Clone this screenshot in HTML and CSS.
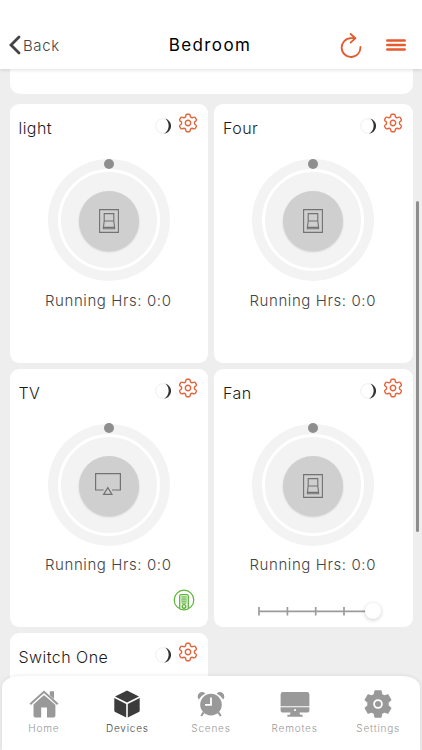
FILE: index.html
```html
<!DOCTYPE html>
<html lang="en">
<head>
<meta charset="utf-8">
<title>Bedroom</title>
<link rel="stylesheet" href="styles.css">
</head>
<body>
<svg class="defs" aria-hidden="true">
  <symbol id="gear" viewBox="-10 -10 20 20">
    <path d="M-2.4-6.2Q-2.1-8.8-1.2-8.8H1.2Q2.1-8.8 2.4-6.2Q3.2-5.2 4.4-5.3Q6.8-6.3 7.3-5.3L8.4-3.3Q8.8-2.5 6.7-1.1Q6 0 6.7 1.1Q8.8 2.5 8.4 3.3L7.3 5.3Q6.8 6.3 4.4 5.3Q3.2 5.2 2.4 6.2Q2.1 8.8 1.2 8.8H-1.2Q-2.1 8.8-2.4 6.2Q-3.2 5.2-4.4 5.3Q-6.8 6.3-7.3 5.3L-8.4 3.3Q-8.8 2.5-6.7 1.1Q-6 0-6.7-1.1Q-8.8-2.5-8.4-3.3L-7.3-5.3Q-6.8-6.3-4.4-5.3Q-3.2-5.2-2.4-6.2Z" fill="none" stroke="#e4643c" stroke-width="1.4" stroke-linejoin="round"/>
    <circle r="2.7" fill="none" stroke="#e4643c" stroke-width="1.4"/>
  </symbol>
  <symbol id="moon" viewBox="0 0 16 16">
    <circle cx="8" cy="8" r="7.3" fill="none" stroke="#e6e6e6" stroke-width=".7"/>
    <path d="M10.4.6A7.7 7.7 0 0 1 9 15.7A9.3 9.3 0 0 0 10.4.6Z" fill="#333"/>
  </symbol>
  <symbol id="switch" viewBox="0 0 20 24">
    <g fill="none" stroke="#727272" stroke-width="1.1">
      <path d="M.6.6H19.4V23.4H.6Z"/>
      <path d="M5.2 4.6H14.8V12L15.6 18.6V19.8H4.4V18.6L5.2 12ZM5.2 12H14.8M4.4 18.4H15.6"/>
    </g>
  </symbol>
  <symbol id="tv" viewBox="0 0 26 22">
    <path d="M8.6 17H.6V.6H25.4V17H17M12.8 14.6L17 21.4H8.6Z" fill="none" stroke="#727272" stroke-width="1.2"/>
  </symbol>
</svg>
<header class="topbar">
  <div class="back">
    <svg width="12" height="20" viewBox="0 0 12 20"><path d="M10 2L2 10L10 18" fill="none" stroke="#444" stroke-width="2.8" stroke-linecap="round"/></svg>
    <span>Back</span>
  </div>
  <h1>Bedroom</h1>
  <div class="actions">
    <svg width="22" height="25" viewBox="0 0 22 25"><path d="M20.4 13.8A9.4 9.4 0 1 1 11 5.2H15.4M10.6 1L15.4 5.2L10.6 9.6" fill="none" stroke="#e55a2e" stroke-width="1.8" stroke-linecap="round" stroke-linejoin="round"/></svg>
    <svg width="20" height="12" viewBox="0 0 20 12"><path d="M1.3 1.4H18.7M1.3 6H18.7M1.3 10.6H18.7" stroke="#e55a2e" stroke-width="2.5" stroke-linecap="round"/></svg>
  </div>
</header>
<main>
  <section class="summary"></section>
  <section class="grid">
    <article class="card">
      <div class="head"><h2>light</h2><svg class="moon"><use href="#moon"/></svg><svg class="gear"><use href="#gear"/></svg></div>
      <div class="dial"><i class="knob"></i><div class="ring"><div class="core"><svg width="20" height="24"><use href="#switch"/></svg></div></div></div>
      <p>Running Hrs: <b>0:0</b></p>
    </article>
    <article class="card">
      <div class="head"><h2>Four</h2><svg class="moon"><use href="#moon"/></svg><svg class="gear"><use href="#gear"/></svg></div>
      <div class="dial"><i class="knob"></i><div class="ring"><div class="core"><svg width="20" height="24"><use href="#switch"/></svg></div></div></div>
      <p>Running Hrs: <b>0:0</b></p>
    </article>
    <article class="card">
      <div class="head"><h2>TV</h2><svg class="moon"><use href="#moon"/></svg><svg class="gear"><use href="#gear"/></svg></div>
      <div class="dial"><i class="knob"></i><div class="ring"><div class="core"><svg class="tv" width="26" height="22"><use href="#tv"/></svg></div></div></div>
      <p>Running Hrs: <b>0:0</b></p>
      <svg class="remote" width="22" height="22" viewBox="0 0 22 22">
        <g fill="none" stroke="#5cb338">
          <circle cx="11" cy="11" r="9.8" stroke-width="1.2"/>
          <path d="M6.7 19.8V7.3Q6.7 5.6 8.4 5.6H13.6Q15.3 5.6 15.3 7.3V19.8" stroke-width="1.3"/>
          <path d="M8.6 7.8H13.4M8.6 10.1H13.4M8.6 12.3H13.4M8.6 14.4H13.4M9 7.4V14M11 7.4V14M13 7.4V14" stroke-width=".8"/>
          <circle cx="11" cy="17.4" r="1.8" stroke-width="1.4"/>
        </g>
      </svg>
    </article>
    <article class="card">
      <div class="head"><h2>Fan</h2><svg class="moon"><use href="#moon"/></svg><svg class="gear"><use href="#gear"/></svg></div>
      <div class="dial"><i class="knob"></i><div class="ring"><div class="core"><svg width="20" height="24"><use href="#switch"/></svg></div></div></div>
      <p>Running Hrs: <b>0:0</b></p>
      <div class="slider"><svg width="115" height="9" viewBox="0 0 115 9"><path d="M1 4.3H114M1 0V8.6M29.4 0V8.6M57.7 0V8.6M86 0V8.6" stroke="#9c9c9c" stroke-width="1.7"/></svg><i class="thumb"></i></div>
    </article>
    <article class="card">
      <div class="head"><h2>Switch One</h2><svg class="moon"><use href="#moon"/></svg><svg class="gear"><use href="#gear"/></svg></div>
    </article>
  </section>
</main>
<i class="scrollbar"></i>
<nav>
  <a><svg width="30" height="28" viewBox="0 0 30 28" fill="#999"><path d="M15 4.9L4.5 14.2V25.5Q4.5 27.4 6.4 27.4H12.2V17.5H18V27.4H24.6Q26.4 27.4 26.4 25.5V14.2Z"/><path d="M1.2 14.3L15 1.8L28.8 14.3" fill="none" stroke="#999" stroke-width="2"/><path d="M3.2 15L15 4.4L26.8 15" fill="none" stroke="#fff" stroke-width=".7"/><path d="M20.8 1.2H25V9L20.8 5.3Z"/></svg><span>Home</span></a>
  <a class="on"><svg width="28" height="28" viewBox="0 0 28 28" fill="#3c3c3c"><path d="M14 .4L26 6.4L14 12.5L2 6.4ZM1.3 8L13.2 14V27.5L2.2 22Q1.3 21.5 1.3 20.5ZM26.7 8L14.8 14V27.5L25.8 22Q26.7 21.5 26.7 20.5Z"/></svg><span>Devices</span></a>
  <a><svg width="28" height="28" viewBox="0 0 28 28" fill="#999"><circle cx="14" cy="14.6" r="10.8"/><path d="M1.8 9.4A4.1 4.1 0 1 1 8.4 3.6Q4.4 5.6 1.8 9.4ZM26.2 9.4A4.1 4.1 0 1 0 19.6 3.6Q23.6 5.6 26.2 9.4Z"/><path d="M6.6 22.4L4.2 26M21.4 22.4L23.8 26" stroke="#999" stroke-width="2"/><path d="M14 7.6V14.8H8" fill="none" stroke="#fff" stroke-width="1.8"/></svg><span>Scenes</span></a>
  <a><svg width="30" height="28" viewBox="0 0 30 28" fill="#999"><path d="M3 2H27Q29.4 2 29.4 4.4V16.2H.6V4.4Q.6 2 3 2ZM.6 17.3H29.4V20Q29.4 22.6 27 22.6H19.5L20 24.8H22.6V26.7H7.4V24.8H10L10.5 22.6H3Q.6 22.6.6 20Z"/><circle cx="15" cy="20" r="1.1" fill="#fff"/></svg><span>Remotes</span></a>
  <a><svg width="28" height="28" viewBox="-14 -14 28 28"><path d="M-3.5-9.4L-2.9-12.9H2.9L3.5-9.4L6.4-7.7L9.7-9L12.6-4L9.9-1.8V1.8L12.6 4L9.7 9L6.4 7.7L3.5 9.4L2.9 12.9H-2.9L-3.5 9.4L-6.4 7.7L-9.7 9L-12.6 4L-9.9 1.8V-1.8L-12.6-4L-9.7-9L-6.4-7.7Z" fill="#999" stroke="#999" stroke-width="1.6" stroke-linejoin="round"/><circle r="3.9" fill="#999" stroke="#fff" stroke-width="1.8"/></svg><span>Settings</span></a>
</nav>
</body>
</html>
```
FILE: styles.css
```css
* { box-sizing: border-box; }
body {
  margin: 0;
  height: 750px;
  overflow: hidden;
  position: relative;
  background: #eee;
  font-family: Inter, "Liberation Sans", sans-serif;
  color: #1c1c1c;
}
svg { display: block; flex: none; }
.defs { position: absolute; width: 0; height: 0; }
h1, h2, p { margin: 0; font-weight: 350; }

.topbar {
  position: relative;
  display: grid;
  grid-template-columns: 1fr auto 1fr;
  align-items: center;
  height: 69px;
  padding: 21px 16px 0 9px;
  background: #fff;
  box-shadow: 0 1px 4px rgba(0, 0, 0, .13);
}
.back { display: flex; align-items: center; gap: 2px; font-size: 15px; font-weight: 300; letter-spacing: .6px; color: #444; }
.topbar h1 { padding-left: 5px; font-size: 17px; font-weight: 400; letter-spacing: 1.4px; color: #000; }
.actions { display: flex; align-items: center; justify-content: flex-end; gap: 24px; }

main { height: 681px; overflow: hidden; padding: 0 9.5px; }
.summary { height: 24.5px; background: #fff; border-radius: 0 0 10px 10px; }
.grid {
  display: grid;
  grid-template-columns: 1fr 1fr;
  grid-auto-rows: 258.5px;
  gap: 6px;
  margin-top: 10.5px;
}
.card { display: flex; flex-direction: column; align-items: center; background: #fff; border-radius: 9px; }
.head { display: flex; align-self: stretch; height: 55px; padding: 9px 10px 0 9px; }
.head h2 { flex: 1; padding-top: 5px; font-size: 16px; line-height: 20px; letter-spacing: .45px; }
.moon { width: 16px; height: 16px; margin: 5px 7px 0 0; }
.gear { width: 20px; height: 20px; }

.dial { position: relative; width: 122px; height: 122px; padding: 10px; border-radius: 50%; background: #f3f3f3; }
.knob { position: absolute; left: 56px; top: -.5px; width: 10px; height: 10px; border-radius: 50%; background: #8e8e8e; }
.ring { display: flex; align-items: center; justify-content: center; width: 102px; height: 102px; border: 3.5px solid #fff; border-radius: 50%; }
.core { display: flex; align-items: center; justify-content: center; width: 60px; height: 60px; margin-top: 2px; border-radius: 50%; background: #cfcfcf; box-shadow: 0 1px 2px rgba(0, 0, 0, .16); }
.tv { margin: -4px 2px 0 0; }
.card p { margin: 9.5px 1px 0 0; font-size: 15px; line-height: 20px; font-weight: 300; letter-spacing: .6px; color: #444; }
.card b { font-weight: 350; }
.remote { align-self: flex-end; margin: 14px 13px 0 0; }
.slider { display: flex; align-items: center; height: 16px; margin: 28px 0 0 12px; }
.thumb { width: 16px; height: 16px; margin-left: -8px; border-radius: 50%; background: #fff; box-shadow: 0 1px 4px rgba(0, 0, 0, .2); }

.scrollbar { position: absolute; left: 415.5px; top: 201px; width: 3.5px; height: 331px; border-radius: 2px; background: #8e8e8e; }

nav {
  position: absolute;
  left: 2px;
  right: 2px;
  bottom: 0;
  height: 74px;
  display: grid;
  grid-template-columns: repeat(5, 1fr);
  padding-top: 14px;
  background: #fff;
  border-radius: 18px 18px 0 0 / 11px 11px 0 0;
  box-shadow: 0 0 4px rgba(0, 0, 0, .1);
}
nav a { display: flex; flex-direction: column; align-items: center; gap: 3px; font-size: 10px; font-weight: 300; line-height: 14px; letter-spacing: .8px; color: #999; }
nav .on { color: #444; }
```
